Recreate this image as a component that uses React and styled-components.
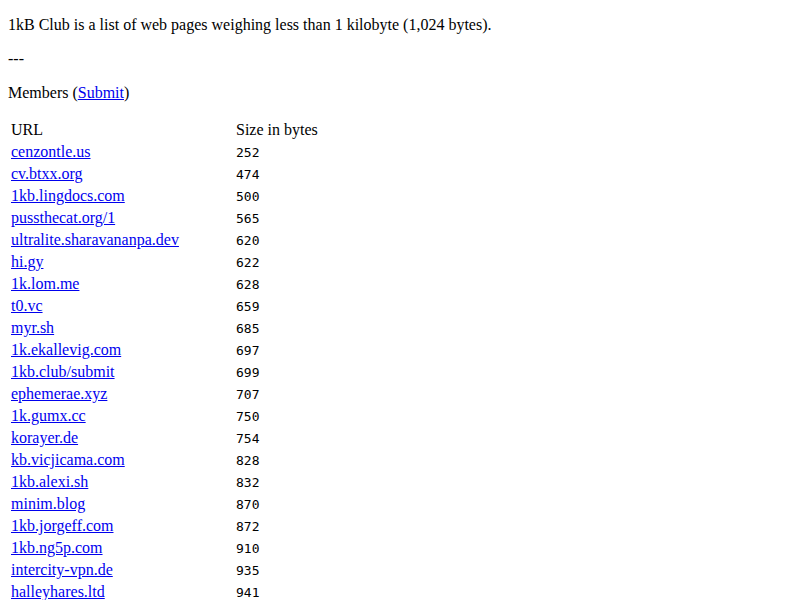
import React from "react";
import styled, { createGlobalStyle } from "styled-components";

const Global = createGlobalStyle`
  body {
    margin: 8px;
    font-family: "Liberation Serif", "Times New Roman", serif;
    font-size: 16px;
    color: #000;
    background: #fff;
  }
`;

const Para = styled.p`
  margin: 16px 0;
  &:first-of-type {
    margin-top: 8px;
  }
`;

const Link = styled.a`
  color: #0000ee;
  text-decoration: underline;
`;

const Table = styled.table`
  border-spacing: 2px;
  border-collapse: separate;
`;

const HeadCell = styled.td`
  padding: 1px;
  text-align: left;
  font-weight: normal;
  width: ${(p) => p.$w || "auto"};
`;

const Cell = styled.td`
  padding: 1px;
`;

const SizeCell = styled.td`
  padding: 1px;
  font-family: "DejaVu Sans Mono", monospace;
  font-size: 13px;
`;

const rows = [
  ["cenzontle.us", 252],
  ["cv.btxx.org", 474],
  ["1kb.lingdocs.com", 500],
  ["pussthecat.org/1", 565],
  ["ultralite.sharavananpa.dev", 620],
  ["hi.gy", 622],
  ["1k.lom.me", 628],
  ["t0.vc", 659],
  ["myr.sh", 685],
  ["1k.ekallevig.com", 697],
  ["1kb.club/submit", 699],
  ["ephemerae.xyz", 707],
  ["1k.gumx.cc", 750],
  ["korayer.de", 754],
  ["kb.vicjicama.com", 828],
  ["1kb.alexi.sh", 832],
  ["minim.blog", 870],
  ["1kb.jorgeff.com", 872],
  ["1kb.ng5p.com", 910],
  ["intercity-vpn.de", 935],
  ["halleyhares.ltd", 941],
];

export default function App() {
  return (
    <>
      <Global />
      <Para>1kB Club is a list of web pages weighing less than 1 kilobyte (1,024 bytes).</Para>
      <Para>---</Para>
      <Para>
        Members (<Link href="#">Submit</Link>)
      </Para>
      <Table>
        <thead>
          <tr>
            <HeadCell $w="221px">URL</HeadCell>
            <HeadCell>Size in bytes</HeadCell>
          </tr>
        </thead>
        <tbody>
          {rows.map(([url, size]) => (
            <tr key={url}>
              <Cell>
                <Link href="#">{url}</Link>
              </Cell>
              <SizeCell>{size}</SizeCell>
            </tr>
          ))}
        </tbody>
      </Table>
    </>
  );
}
